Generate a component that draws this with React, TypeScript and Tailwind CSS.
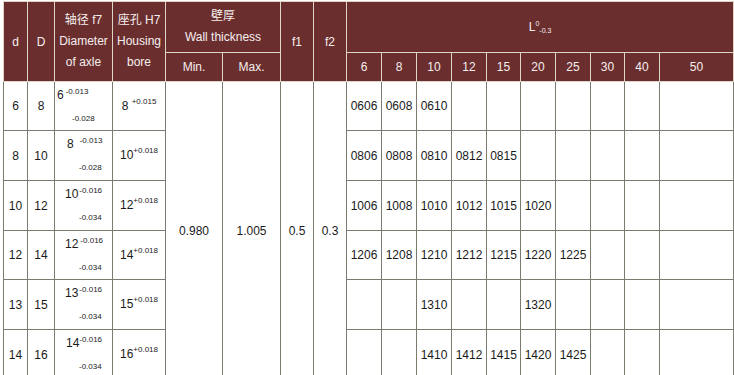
import React from 'react';

const rows = [
  { d: '6', D: '8', tol: { main: '6', up: '-0.013', low: '-0.028', mainCls: 'ml-[2px]', upCls: 'ml-[2px]', lowCls: 'ml-[17px]' }, bore: { main: '8 ', up: '+0.015' }, codes: ['0606', '0608', '0610', '', '', '', '', '', '', ''], h: 'h-[49px]' },
  { d: '8', D: '10', tol: { main: '8', up: '-0.013', low: '-0.028', mainCls: 'ml-[12px]', upCls: 'ml-[6px]', lowCls: 'ml-[24px]' }, bore: { main: '10', up: '+0.018' }, codes: ['0806', '0808', '0810', '0812', '0815', '', '', '', '', ''], h: 'h-[50px]' },
  { d: '10', D: '12', tol: { main: '10', up: '-0.016', low: '-0.034', mainCls: 'ml-[10px]', upCls: 'ml-[1px]', lowCls: 'ml-[24px]' }, bore: { main: '12', up: '+0.018' }, codes: ['1006', '1008', '1010', '1012', '1015', '1020', '', '', '', ''], h: 'h-[50px]' },
  { d: '12', D: '14', tol: { main: '12', up: '-0.016', low: '-0.034', mainCls: 'ml-[10px]', upCls: 'ml-[2px]', lowCls: 'ml-[24px]' }, bore: { main: '14', up: '+0.018' }, codes: ['1206', '1208', '1210', '1212', '1215', '1220', '1225', '', '', ''], h: 'h-[49px]' },
  { d: '13', D: '15', tol: { main: '13', up: '-0.016', low: '-0.034', mainCls: 'ml-[10px]', upCls: 'ml-[1px]', lowCls: 'ml-[24px]' }, bore: { main: '15', up: '+0.018' }, codes: ['', '', '1310', '', '', '1320', '', '', '', ''], h: 'h-[50px]' },
  { d: '14', D: '16', tol: { main: '14', up: '-0.016', low: '-0.034', mainCls: 'ml-[11px]', upCls: 'ml-[0px]', lowCls: 'ml-[24px]' }, bore: { main: '16', up: '+0.018' }, codes: ['', '', '1410', '1412', '1415', '1420', '1425', '', '', ''], h: 'h-[50px]' },
];

const lengths = ['6', '8', '10', '12', '15', '20', '25', '30', '40', '50'];
const widths = ['w-[24px]', 'w-[27px]', 'w-[58px]', 'w-[53px]', 'w-[57px]', 'w-[58px]', 'w-[33px]', 'w-[33px]', 'w-[35px]', 'w-[35px]', 'w-[35px]', 'w-[35px]', 'w-[34px]', 'w-[35px]', 'w-[35px]', 'w-[34px]', 'w-[35px]', 'w-[74px]'];

const th = 'border border-[#ddd5c6] bg-[#6b2e2e] text-[#f5eeee] font-normal text-center align-middle p-0';
const td = 'border border-[#7b7a70] text-center align-middle p-0';

export default function App() {
  return (
    <div className="min-h-screen bg-white pt-[1px] pl-[3px] font-['Liberation_Sans','Noto_Sans_CJK_SC',sans-serif] text-[12px] text-[#1a1a1a]">
      <table className="table-fixed border-collapse w-[730px]">
        <colgroup>
          {widths.map((w, i) => <col key={i} className={w} />)}
        </colgroup>
        <thead>
          <tr className="h-[51px]">
            <th rowSpan={2} className={th}>d</th>
            <th rowSpan={2} className={th}>D</th>
            <th rowSpan={2} className={`${th} leading-[21px]`}>轴径 f7<br />Diameter<br />of axle</th>
            <th rowSpan={2} className={`${th} leading-[21px]`}>座孔 H7<br />Housing<br />bore</th>
            <th colSpan={2} className={`${th} leading-[21px]`}>壁厚<br />Wall thickness</th>
            <th rowSpan={2} className={th}>f1</th>
            <th rowSpan={2} className={th}>f2</th>
            <th colSpan={10} className={th}>
              L<span className="text-[7px] align-[5px]">0</span><span className="text-[7px] align-[-2px]">-0.3</span>
            </th>
          </tr>
          <tr className="h-[29px]">
            <th className={th}>Min.</th>
            <th className={th}>Max.</th>
            {lengths.map(l => <th key={l} className={th}>{l}</th>)}
          </tr>
        </thead>
        <tbody>
          {rows.map((r, i) => (
            <tr key={r.d} className={r.h}>
              <td className={td}>{r.d}</td>
              <td className={td}>{r.D}</td>
              <td className="border border-[#7b7a70] align-top p-0 text-left">
                <div className="flex items-start">
                  <span className={`text-[12px] leading-[14px] mt-[6px] ${r.tol.mainCls}`}>{r.tol.main}</span>
                  <span className={`text-[8px] leading-[10px] mt-[5px] ${r.tol.upCls}`}>{r.tol.up}</span>
                </div>
                <div className={`text-[8px] leading-[10px] mt-[12px] ${r.tol.lowCls}`}>{r.tol.low}</div>
              </td>
              <td className="border border-[#7b7a70] align-top p-0">
                <div className="flex items-start justify-center">
                  <span className="text-[12px] leading-[14px] mt-[17px] whitespace-pre">{r.bore.main}</span>
                  <span className="text-[8px] leading-[10px] mt-[15px]">{r.bore.up}</span>
                </div>
              </td>
              {i === 0 && (
                <>
                  <td rowSpan={6} className={td}>0.980</td>
                  <td rowSpan={6} className={td}>1.005</td>
                  <td rowSpan={6} className={td}>0.5</td>
                  <td rowSpan={6} className={td}>0.3</td>
                </>
              )}
              {r.codes.map((c, j) => <td key={j} className={td}>{c}</td>)}
            </tr>
          ))}
        </tbody>
      </table>
    </div>
  );
}
